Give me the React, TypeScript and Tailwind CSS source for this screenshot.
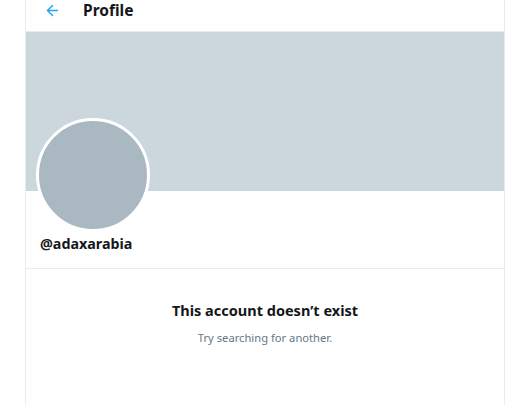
import { ArrowLeft } from "lucide-react";

const App = () => {
  return (
    <div className="min-h-[405px] bg-white" style={{ fontFamily: '"Noto Sans", "Open Sans", sans-serif' }}>
      <div className="ml-[25px] w-[480px] min-h-[405px] border-x border-[#e6ecf0]">
        {/* header */}
        <div className="h-[32px] flex items-start border-b border-[#e6ecf0]">
          <div className="w-[57px] pl-[18px] pt-[2px]">
            <ArrowLeft size={17} color="#1da1f2" strokeWidth={2} />
          </div>
          <span className="text-[15.5px] font-bold text-[#14171a] leading-[20px]">Profile</span>
        </div>

        {/* banner */}
        <div className="h-[159px] bg-[#ccd6dd]" />

        <div className="px-[10px] border-b border-[#e6ecf0] pb-[14px]">
          <div className="-mt-[73px] w-[114px] h-[114px] rounded-full bg-[#aab8c2] border-[3px] border-white" />
          <div className="pl-[4px] pt-[2px] text-[14.3px] font-bold text-[#14171a] leading-[20px]">@adaxarabia</div>
        </div>

        <div className="flex flex-col items-center pt-[31px]">
          <div className="text-[14.5px] font-bold text-[#14171a] leading-[20px]">This account doesn’t exist</div>
          <div className="mt-[10px] text-[11.2px] text-[#657786] leading-[16px]">Try searching for another.</div>
        </div>
      </div>
    </div>
  );
};

export default App;
